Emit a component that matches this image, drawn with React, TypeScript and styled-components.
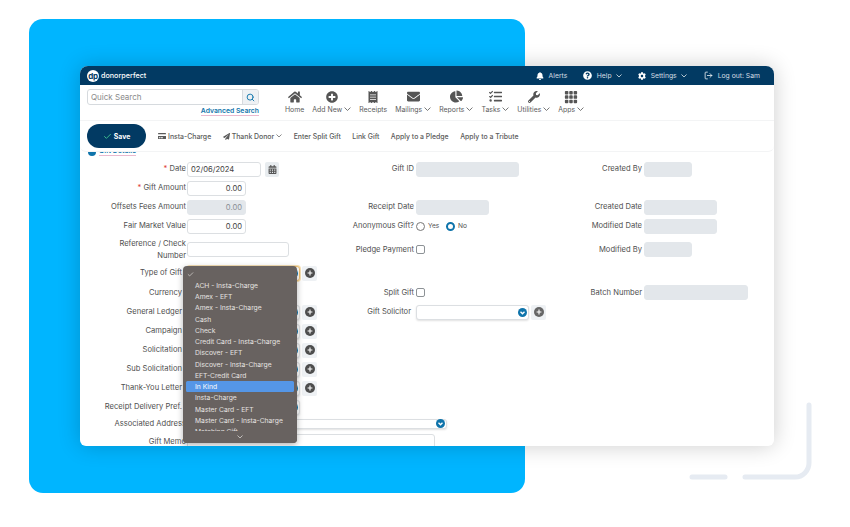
import React from "react";
import styled, { createGlobalStyle } from "styled-components";
import { Search, Check, LogOut } from "lucide-react";
import {
  FaHome, FaPlusCircle, FaReceipt, FaEnvelope, FaChartPie, FaTasks, FaWrench,
  FaBell, FaQuestionCircle, FaCog, FaCreditCard, FaPaperPlane, FaCalendarAlt,
} from "react-icons/fa";
import { BsFillGrid3X3GapFill } from "react-icons/bs";

const Global = createGlobalStyle`
  html, body { margin: 0; padding: 0; background: #fff; }
  * { box-sizing: border-box; }
`;

const Stage = styled.div`
  position: relative;
  width: 850px;
  height: 527px;
  overflow: hidden;
  padding: 19px 0 0 29px;
  background: #fff;
  font-family: Inter, "Liberation Sans", sans-serif;
`;
const BluePanel = styled.div`
  width: 496px;
  height: 474px;
  border-radius: 14px;
  background: #00b5ff;
`;
const CornerDecor = styled.svg`
  position: absolute;
  left: 685px;
  top: 398px;
`;
const Window = styled.div`
  position: absolute;
  left: 80px;
  top: 66px;
  width: 694px;
  height: 380px;
  display: flex;
  flex-direction: column;
  background: #fff;
  border-radius: 8px 8px 6px 6px;
  overflow: hidden;
  box-shadow: 0 0 22px rgba(0, 0, 0, 0.2);
`;
const TopBar = styled.div`
  height: 19px;
  flex: none;
  display: flex;
  align-items: center;
  padding: 0 14px 0 7px;
  background: #023a63;
  color: #d5dde4;
  font-size: 6.8px;
`;
const Logo = styled.div`
  display: flex;
  align-items: center;
  gap: 2px;
  margin-right: auto;
  color: #fff;
  font-size: 7.2px;
  font-weight: 500;
`;
const LogoMark = styled.div`
  width: 12px;
  height: 12px;
  border-radius: 50%;
  background: #fff;
  color: #023a63;
  display: flex;
  align-items: center;
  justify-content: center;
  font-size: 8px;
  font-weight: 700;
  letter-spacing: -0.4px;
`;
const TopItem = styled.div<{ $ml: number }>`
  display: flex;
  align-items: center;
  gap: 4.5px;
  margin-left: ${(p) => p.$ml}px;
  color: #d5dde4;
  svg { color: #fff; flex: none; }
`;
const Header = styled.div`
  height: 35px;
  flex: none;
  display: flex;
  gap: 26px;
  padding: 4px 0 0 7px;
`;
const SearchBlock = styled.div`
  width: 172px;
  display: flex;
  flex-direction: column;
  align-items: flex-end;
`;
const SearchRow = styled.div`
  width: 100%;
  height: 16px;
  display: flex;
  border: 1px solid #d6dade;
  border-radius: 3px;
  overflow: hidden;
`;
const SearchText = styled.div`
  flex: 1;
  padding: 0 3px;
  line-height: 14px;
  font-size: 8px;
  color: #8a8a8a;
`;
const SearchButton = styled.div`
  width: 16px;
  display: flex;
  align-items: center;
  justify-content: center;
  background: #eef1f4;
  border-left: 1px solid #d6dade;
  color: #0f74ab;
`;
const AdvancedLink = styled.div`
  margin-top: 2px;
  font-size: 6.8px;
  font-weight: 600;
  line-height: 8px;
  color: #0f74ab;
  border-bottom: 1px solid #eab9cf;
`;
const Nav = styled.div`
  display: flex;
  gap: 8px;
`;
const NavItem = styled.div`
  display: flex;
  flex-direction: column;
  align-items: center;
  gap: 2px;
  padding-top: 1.5px;
  color: #555;
`;
const NavIcon = styled.div`
  height: 12px;
  display: flex;
  align-items: center;
  justify-content: center;
`;
const NavLabel = styled.div`
  display: flex;
  align-items: center;
  gap: 2px;
  font-size: 6.9px;
  line-height: 9px;
  color: #5c5c5c;
  white-space: nowrap;
`;
const ActionBar = styled.div`
  position: relative;
  z-index: 1;
  height: 32px;
  flex: none;
  display: flex;
  align-items: center;
  padding-left: 7px;
  background: #fff;
  border-top: 1px solid #f3f4f5;
  border-bottom: 1px solid #f3f4f5;
  border-radius: 0 0 6px 6px;
  font-size: 6.9px;
  font-weight: 500;
  color: #5a5a5a;
`;
const SaveButton = styled.div`
  width: 59px;
  height: 24px;
  margin-right: 12px;
  border-radius: 12px;
  background: #023a63;
  color: #fff;
  font-weight: 700;
  display: flex;
  align-items: center;
  justify-content: center;
  gap: 2px;
  svg { color: #3fc18f; }
`;
const Action = styled.div`
  display: flex;
  align-items: center;
  gap: 2px;
  margin-right: 11.5px;
  white-space: nowrap;
`;
const Form = styled.div`
  flex: 1;
  overflow: hidden;
  padding-top: 7.5px;
`;
const SectionLink = styled.div`
  height: 10px;
  margin: -14px 0 4px 8px;
  display: flex;
  align-items: flex-end;
  gap: 3px;
  font-size: 7px;
  line-height: 8px;
  font-weight: 600;
  color: #0f74ab;
`;
const SectionDot = styled.span`
  width: 8px;
  height: 8px;
  border-radius: 50%;
  background: #0f74ab;
`;
const SectionText = styled.span`
  border-bottom: 1px solid #eab9cf;
`;
const Row = styled.div<{ $h?: number }>`
  height: ${(p) => p.$h ?? 19}px;
  display: grid;
  grid-template-columns: 107px 153px 76px 154px 74px 130px;
  align-items: center;
`;
const Label = styled.div<{ $pr?: number }>`
  padding-right: ${(p) => p.$pr ?? 2}px;
  text-align: right;
  font-size: 7.6px;
  line-height: 11.5px;
  color: #4f4f4f;
  white-space: nowrap;
`;
const Req = styled.span`
  color: #e0402f;
`;
const Field = styled.div<{ $span?: number }>`
  grid-column: span ${(p) => p.$span ?? 1};
  display: flex;
  align-items: center;
  gap: 4px;
  min-width: 0;
`;
const Input = styled.div<{ $w: number; $right?: boolean; $filled?: boolean }>`
  width: ${(p) => p.$w}px;
  height: 15px;
  padding: 0 3px;
  border: 1px solid ${(p) => (p.$filled ? "#e3e7eb" : "#dcdfe2")};
  border-radius: 3px;
  background: ${(p) => (p.$filled ? "#e3e7eb" : "#fff")};
  text-align: ${(p) => (p.$right ? "right" : "left")};
  font-size: 7.6px;
  line-height: 13px;
  color: ${(p) => (p.$filled ? "#8a9096" : "#444")};
`;
const CalendarButton = styled.div`
  width: 14px;
  height: 15px;
  border-radius: 2px;
  background: #e8ecef;
  color: #555;
  display: flex;
  align-items: center;
  justify-content: center;
`;
const Select = styled.div<{ $w: number; $focus?: boolean; $h?: number }>`
  width: ${(p) => p.$w}px;
  height: ${(p) => p.$h ?? 15}px;
  flex: none;
  display: flex;
  align-items: center;
  justify-content: flex-end;
  padding-right: 1px;
  background: #fff;
  border: 1px solid ${(p) => (p.$focus ? "#f0c070" : "#dcdfe2")};
  border-radius: 3px;
  box-shadow: ${(p) => (p.$focus ? "0 0 0 1px #f7e0b4" : "0 1px 2px rgba(0, 0, 0, 0.12)")};
`;
const PlusButton = styled.div<{ $muted?: boolean }>`
  width: 15px;
  height: 15px;
  margin-left: -2px;
  border-radius: 2px;
  background: #eef1f4;
  color: ${(p) => (p.$muted ? "#666" : "#4d4d4d")};
  display: flex;
  align-items: center;
  justify-content: center;
`;
const Box = styled.div`
  width: 9px;
  height: 9px;
  border: 1px solid #8d9296;
  border-radius: 2px;
`;
const RadioGroup = styled.div`
  display: flex;
  align-items: center;
  font-size: 6.6px;
  color: #4f4f4f;
`;
const Radio = styled.div<{ $on?: boolean }>`
  width: 9px;
  height: 9px;
  margin-right: 3px;
  border-radius: 50%;
  background: #fff;
  border: ${(p) => (p.$on ? "2.5px solid #0f74ab" : "1px solid #777")};
`;
const RadioText = styled.span`
  width: 18px;
`;
const Dropdown = styled.div`
  position: absolute;
  z-index: 2;
  left: 103px;
  top: 200px;
  width: 114px;
  height: 177px;
  padding: 2.5px 3px 0;
  border-radius: 4px;
  background: #686260;
  overflow: hidden;
  box-shadow: 0 2px 6px rgba(0, 0, 0, 0.3);
  color: #e6e3e0;
  font-size: 6.75px;
`;
const Option = styled.div<{ $active?: boolean }>`
  height: 11.27px;
  line-height: 11.27px;
  padding-left: 9px;
  border-radius: 1.5px;
  background: ${(p) => (p.$active ? "#5596e6" : "transparent")};
  color: ${(p) => (p.$active ? "#fff" : "#e6e3e0")};
  white-space: nowrap;
`;
const CheckRow = styled.div`
  height: 11.27px;
  display: flex;
  align-items: center;
  padding-left: 1px;
`;
const ScrollHint = styled.div`
  position: absolute;
  left: 0;
  right: 0;
  bottom: 0;
  height: 12px;
  display: flex;
  justify-content: center;
  align-items: center;
  background: #686260;
`;
const Badge = () => (
  <svg width="9" height="9" viewBox="0 0 10 10">
    <circle cx="5" cy="5" r="5" fill="#0f74ab" />
    <path d="M2.8 4.2 5 6.4 7.2 4.2" fill="none" stroke="#fff" strokeWidth="1.5" />
  </svg>
);
const Plus = () => (
  <svg width="10" height="10" viewBox="0 0 10 10">
    <circle cx="5" cy="5" r="5" fill="currentColor" />
    <path d="M5 2.6v4.8M2.6 5h4.8" stroke="#fff" strokeWidth="1.1" />
  </svg>
);
const Chev = ({ w = 7 }: { w?: number }) => (
  <svg width={w} height={w * 0.6} viewBox="0 0 10 6" fill="none">
    <path d="M.8.8 5 5 9.2.8" stroke="currentColor" strokeWidth="1.2" />
  </svg>
);

const nav = [
  { label: "Home", icon: <FaHome size={14} /> },
  { label: "Add New", icon: <FaPlusCircle size={12} />, chev: true },
  { label: "Receipts", icon: <FaReceipt size={12} /> },
  { label: "Mailings", icon: <FaEnvelope size={13} />, chev: true },
  { label: "Reports", icon: <FaChartPie size={13} />, chev: true },
  { label: "Tasks", icon: <FaTasks size={13} />, chev: true },
  { label: "Utilities", icon: <FaWrench size={12} />, chev: true },
  { label: "Apps", icon: <BsFillGrid3X3GapFill size={14} />, chev: true },
];
const options = [
  "ACH - Insta-Charge", "Amex - EFT", "Amex - Insta-Charge", "Cash", "Check",
  "Credit Card - Insta-Charge", "Discover - EFT", "Discover - Insta-Charge",
  "EFT-Credit Card", "In Kind", "Insta-Charge", "Master Card - EFT",
  "Master Card - Insta-Charge", "Matching Gift",
];
const selectRows = ["Campaign", "Solicitation", "Sub Solicitation", "Thank-You Letter"];

export default function App() {
  return (
    <Stage>
      <Global />
      <BluePanel />
      <CornerDecor width="130" height="90" viewBox="0 0 130 90" fill="none">
        <path d="M124 7v58a14 14 0 0 1-14 14H60" stroke="#e6ebf2" strokeWidth="5" strokeLinecap="round" />
        <path d="M7 79h33" stroke="#e6ebf2" strokeWidth="5" strokeLinecap="round" />
      </CornerDecor>
      <Window>
        <TopBar>
          <Logo>
            <LogoMark>dp</LogoMark>
            donorperfect
          </Logo>
          <TopItem $ml={0}><FaBell size={8} />Alerts</TopItem>
          <TopItem $ml={16}><FaQuestionCircle size={9} />Help<Chev w={6} /></TopItem>
          <TopItem $ml={16}><FaCog size={8} />Settings<Chev w={6} /></TopItem>
          <TopItem $ml={17}><LogOut size={9} />Log out: Sam</TopItem>
        </TopBar>
        <Header>
          <SearchBlock>
            <SearchRow>
              <SearchText>Quick Search</SearchText>
              <SearchButton><Search size={9} strokeWidth={2.5} /></SearchButton>
            </SearchRow>
            <AdvancedLink>Advanced Search</AdvancedLink>
          </SearchBlock>
          <Nav>
            {nav.map((n) => (
              <NavItem key={n.label}>
                <NavIcon>{n.icon}</NavIcon>
                <NavLabel>{n.label}{n.chev && <Chev />}</NavLabel>
              </NavItem>
            ))}
          </Nav>
        </Header>
        <ActionBar>
          <SaveButton><Check size={9} strokeWidth={2.5} />Save</SaveButton>
          <Action><FaCreditCard size={8} />Insta-Charge</Action>
          <Action><FaPaperPlane size={7} />Thank Donor<Chev w={6} /></Action>
          <Action>Enter Split Gift</Action>
          <Action>Link Gift</Action>
          <Action>Apply to a Pledge</Action>
          <Action>Apply to a Tribute</Action>
        </ActionBar>
        <Form>
          <SectionLink><SectionDot /><SectionText>Gift Details</SectionText></SectionLink>
          <Row>
            <Label $pr={1}><Req>*</Req> Date</Label>
            <Field><Input $w={74}>02/06/2024</Input><CalendarButton><FaCalendarAlt size={9} /></CalendarButton></Field>
            <Label>Gift ID</Label>
            <Field><Input $w={103} $filled /></Field>
            <Label>Created By</Label>
            <Field><Input $w={48} $filled /></Field>
          </Row>
          <Row>
            <Label $pr={1}><Req>*</Req> Gift Amount</Label>
            <Field><Input $w={59} $right>0.00</Input></Field>
          </Row>
          <Row>
            <Label $pr={1}>Offsets Fees Amount</Label>
            <Field><Input $w={59} $right $filled>0.00</Input></Field>
            <Label>Receipt Date</Label>
            <Field><Input $w={73} $filled /></Field>
            <Label>Created Date</Label>
            <Field><Input $w={73} $filled /></Field>
          </Row>
          <Row>
            <Label $pr={1}>Fair Market Value</Label>
            <Field><Input $w={59} $right>0.00</Input></Field>
            <Label>Anonymous Gift?</Label>
            <RadioGroup>
              <Radio /><RadioText>Yes</RadioText>
              <Radio $on /><RadioText>No</RadioText>
            </RadioGroup>
            <Label>Modified Date</Label>
            <Field><Input $w={73} $filled /></Field>
          </Row>
          <Row $h={28}>
            <Label $pr={1}>Reference / Check<br />Number</Label>
            <Field><Input $w={102} /></Field>
            <Label>Pledge Payment</Label>
            <Field><Box /></Field>
            <Label>Modified By</Label>
            <Field><Input $w={48} $filled /></Field>
          </Row>
          <Row>
            <Label $pr={5}>Type of Gift</Label>
            <Field><Select $w={113} $focus><Badge /></Select><PlusButton><Plus /></PlusButton></Field>
          </Row>
          <Row $h={20}>
            <Label $pr={5}>Currency</Label>
            <Field />
            <Label>Split Gift</Label>
            <Field><Box /></Field>
            <Label>Batch Number</Label>
            <Field><Input $w={104} $filled /></Field>
          </Row>
          <Row>
            <Label $pr={5}>General Ledger</Label>
            <Field><Select $w={113}><Badge /></Select><PlusButton><Plus /></PlusButton></Field>
            <Label $pr={5}>Gift Solicitor</Label>
            <Field><Select $w={113}><Badge /></Select><PlusButton $muted><Plus /></PlusButton></Field>
          </Row>
          {selectRows.map((l) => (
            <Row key={l}>
              <Label $pr={5}>{l}</Label>
              <Field><Select $w={113}><Badge /></Select><PlusButton><Plus /></PlusButton></Field>
            </Row>
          ))}
          <Row>
            <Label $pr={5}>Receipt Delivery Pref.</Label>
            <Field><Select $w={113}><Badge /></Select></Field>
          </Row>
          <Row $h={14}>
            <Label $pr={1}>Associated Address</Label>
            <Field $span={3}><Select $w={260} $h={10}><Badge /></Select></Field>
          </Row>
          <Row $h={22}>
            <Label $pr={1}>Gift Memo</Label>
            <Field $span={3}><Input $w={248} /></Field>
          </Row>
        </Form>
        <Dropdown>
          <CheckRow><Check size={7} strokeWidth={2.2} /></CheckRow>
          {options.map((o) => (
            <Option key={o} $active={o === "In Kind"}>{o}</Option>
          ))}
          <ScrollHint><Chev w={6} /></ScrollHint>
        </Dropdown>
      </Window>
    </Stage>
  );
}
